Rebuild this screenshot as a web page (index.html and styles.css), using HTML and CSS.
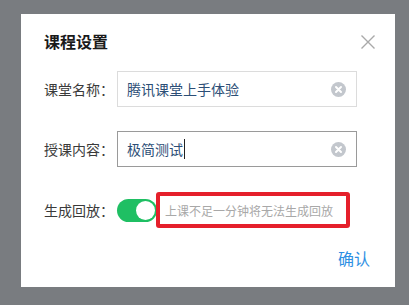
FILE: index.html
```html
<!DOCTYPE html>
<html lang="zh-CN">
<head>
<meta charset="utf-8">
<link rel="stylesheet" href="styles.css">
</head>
<body>
<div class="dialog">
  <div class="header">
    <div class="title">课程设置</div>
    <svg class="close" width="16" height="16" viewBox="0 0 16 16"><path d="M1.5 1.5 L14.5 14.5 M14.5 1.5 L1.5 14.5" stroke="#a9a9a9" stroke-width="1.4" fill="none"/></svg>
  </div>
  <div class="row first">
    <div class="label">课堂名称：</div>
    <div class="input">
      <span class="value">腾讯课堂上手体验</span>
      <svg class="clear" width="15" height="15" viewBox="0 0 15 15"><circle cx="7.5" cy="7.5" r="7.5" fill="#c3c7cd"/><path d="M5 5 L10 10 M10 5 L5 10" stroke="#fff" stroke-width="2" stroke-linecap="round"/></svg>
    </div>
  </div>
  <div class="row">
    <div class="label">授课内容：</div>
    <div class="input focused">
      <span class="value">极简测试</span><span class="caret"></span>
      <svg class="clear" width="15" height="15" viewBox="0 0 15 15"><circle cx="7.5" cy="7.5" r="7.5" fill="#c3c7cd"/><path d="M5 5 L10 10 M10 5 L5 10" stroke="#fff" stroke-width="2" stroke-linecap="round"/></svg>
    </div>
  </div>
  <div class="row toggle-row">
    <div class="label">生成回放：</div>
    <div class="switch"><span class="knob"></span></div>
    <div class="hint">上课不足一分钟将无法生成回放</div>
  </div>
  <div class="footer">
    <span class="confirm">确认</span>
  </div>
</div>
</body>
</html>
```

FILE: styles.css
```css
html, body {
  margin: 0;
  padding: 0;
  background: #797c80;
  font-family: "Noto Sans CJK SC", "Liberation Sans", sans-serif;
}
.dialog {
  margin: 14px 0 0 21px;
  width: 374px;
  height: 273px;
  background: #fff;
  box-sizing: border-box;
  padding: 16px 20px 0 23px;
  display: flex;
  flex-direction: column;
}
.header {
  display: flex;
  justify-content: space-between;
  align-items: flex-start;
  height: 22px;
}
.title {
  font-size: 16px;
  line-height: 22px;
  font-weight: 700;
  color: #1a1a1a;
}
.close {
  margin-top: 4px;
  margin-right: -1px;
}
.row {
  display: flex;
  align-items: center;
  height: 36px;
  margin-top: 24px;
}
.row.first {
  margin-top: 19px;
}
.label {
  width: 73px;
  font-size: 14px;
  line-height: 20px;
  color: #3a3a3a;
  flex: none;
}
.input {
  width: 240px;
  height: 36px;
  box-sizing: border-box;
  border: 1px solid #dcdcdc;
  padding: 0 10px 0 9px;
  display: flex;
  align-items: center;
}
.input.focused {
  border-color: #9a9a9a;
}
.value {
  font-size: 14px;
  line-height: 20px;
  color: #2c4e76;
}
.caret {
  width: 1px;
  height: 20px;
  background: #222;
  margin-left: 1px;
}
.clear {
  margin-left: auto;
}
.toggle-row {
  margin-top: 25px;
}
.switch {
  width: 40px;
  height: 23px;
  border-radius: 12px;
  background: #1fbf63;
  display: flex;
  align-items: center;
  justify-content: flex-end;
  padding-right: 2px;
  box-sizing: border-box;
  flex: none;
}
.knob {
  width: 19px;
  height: 19px;
  border-radius: 50%;
  background: #fff;
}
.hint {
  margin-left: -1px;
  width: 194px;
  height: 36px;
  box-sizing: border-box;
  border: 4px solid #e5202b;
  border-radius: 3px;
  padding-left: 5px;
  display: flex;
  align-items: center;
  font-size: 12px;
  color: #a8a8a8;
  white-space: nowrap;
}
.footer {
  margin-top: 18px;
  text-align: right;
  padding-right: 5px;
}
.confirm {
  font-size: 16px;
  line-height: 22px;
  color: #2e8fe3;
}
```
